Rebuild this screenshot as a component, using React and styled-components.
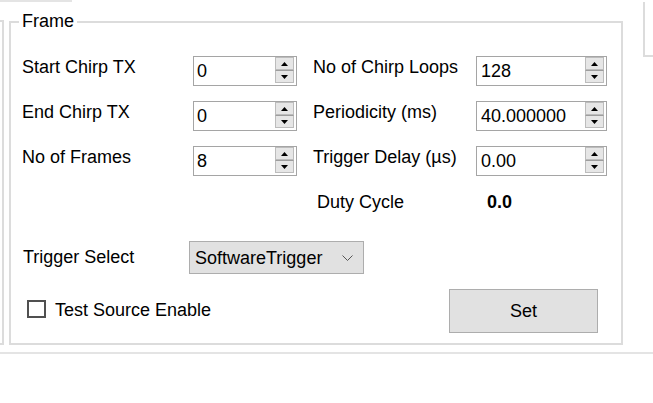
import React from 'react';
import styled, { createGlobalStyle } from 'styled-components';

const GlobalStyle = createGlobalStyle`
  body {
    margin: 0;
    background: #fff;
    font-family: "Liberation Sans", Arial, sans-serif;
    color: #000;
  }
`;

const Page = styled.div`
  width: 653px;
  height: 403px;
  overflow: hidden;
  background: #fff;
  display: flex;
  flex-direction: column;
`;

const TopRule = styled.div`
  width: 72px;
  height: 2px;
  background: #e4e4e4;
  flex-shrink: 0;
`;

const Body = styled.div`
  display: flex;
  flex-direction: row;
  align-items: flex-start;
`;

const SideStub = styled.div`
  box-sizing: border-box;
  width: 4px;
  height: 325px;
  margin-top: 18px;
  border: 2px solid #dcdcdc;
  border-left: none;
  flex-shrink: 0;
`;

const RightStub = styled.div`
  box-sizing: border-box;
  flex: 1;
  height: 55px;
  margin-left: 20px;
  border-left: 2px solid #dcdcdc;
  border-bottom: 2px solid #dcdcdc;
`;

const GroupBox = styled.fieldset`
  box-sizing: border-box;
  width: 614px;
  height: 334px;
  min-width: 0;
  margin: 9px 0 0 5px;
  padding: 24px 14px 0 11px;
  border: 2px solid #dcdcdc;
  flex-shrink: 0;
`;

const Legend = styled.legend`
  font-size: 18px;
  line-height: 21px;
  padding: 0 3px;
  margin-left: -3px;
`;

const SpinGrid = styled.div`
  display: grid;
  grid-template-columns: 171px 120px 163px 131px;
  grid-auto-rows: 30px;
  row-gap: 15px;
`;

const Label = styled.span`
  grid-column: ${p => p.$col || 'auto'};
  align-self: start;
  margin-top: 1px;
  padding-left: ${p => p.$indent || 0}px;
  font-size: 18px;
  line-height: 21px;
  white-space: nowrap;
`;

const Value = styled.span`
  align-self: start;
  margin-top: 1px;
  padding-left: 11px;
  font-size: 18px;
  line-height: 21px;
  font-weight: bold;
`;

const SpinBox = styled.div`
  box-sizing: border-box;
  width: ${p => p.$width}px;
  height: 30px;
  border: 1px solid #a5a5a5;
  background: #fff;
  display: flex;
  flex-direction: row;
`;

const SpinField = styled.div`
  flex: 1;
  padding: 4px 0 0 ${p => p.$pad || 3}px;
  font-size: 18px;
  line-height: 21px;
  white-space: nowrap;
  overflow: hidden;
`;

const Spinner = styled.div`
  width: 19px;
  margin: 0 2px 2px 0;
  display: flex;
  flex-direction: column;
`;

const SpinButton = styled.div`
  flex: 1;
  box-sizing: border-box;
  background: #e6e6e6;
  border: 1px solid #bcbcbc;
  display: flex;
  align-items: center;
  justify-content: center;
  & + & {
    border-top: 1px solid #9d9d9d;
  }
`;

const TriggerRow = styled.div`
  display: flex;
  align-items: center;
  margin-top: 20px;
`;

const RowLabel = styled.span`
  box-sizing: border-box;
  width: 167px;
  padding-left: 1px;
  font-size: 18px;
  line-height: 21px;
`;

const Combo = styled.div`
  box-sizing: border-box;
  width: 175px;
  height: 33px;
  padding: 1px 10px 0 5px;
  background: #e1e1e1;
  border: 1px solid #adadad;
  display: flex;
  align-items: center;
  justify-content: space-between;
  font-size: 18px;
  line-height: 21px;
`;

const BottomRow = styled.div`
  display: flex;
  justify-content: space-between;
  align-items: flex-start;
  margin-top: 15px;
`;

const CheckGroup = styled.label`
  display: flex;
  align-items: flex-start;
  gap: 9px;
  margin: 11px 0 0 5px;
  font-size: 18px;
  line-height: 21px;
`;

const CheckBox = styled.span`
  box-sizing: border-box;
  width: 19px;
  height: 18px;
  border: 2px solid #505050;
  background: #fff;
`;

const Button = styled.div`
  box-sizing: border-box;
  width: 149px;
  height: 44px;
  margin-right: 9px;
  background: #e1e1e1;
  border: 1px solid #adadad;
  display: flex;
  align-items: center;
  justify-content: center;
  font-size: 18px;
  line-height: 21px;
  padding-top: 1px;
`;

const BottomRule = styled.div`
  height: 2px;
  margin-top: 7px;
  background: #e4e4e4;
`;

const ArrowUp = () => (
  <svg width="7" height="4" viewBox="0 0 7 4"><polygon points="3.5,0 7,4 0,4" fill="#000" /></svg>
);

const ArrowDown = () => (
  <svg width="7" height="4" viewBox="0 0 7 4"><polygon points="0,0 7,0 3.5,4" fill="#000" /></svg>
);

const Chevron = () => (
  <svg width="11" height="6" viewBox="0 0 11 6">
    <polyline points="0.5,0.5 5.5,5.5 10.5,0.5" fill="none" stroke="#555" strokeWidth="1" />
  </svg>
);

const Spin = ({ value, width, pad }) => (
  <SpinBox $width={width}>
    <SpinField $pad={pad}>{value}</SpinField>
    <Spinner>
      <SpinButton><ArrowUp /></SpinButton>
      <SpinButton><ArrowDown /></SpinButton>
    </Spinner>
  </SpinBox>
);

const rows = [
  ['Start Chirp TX', '0', 'No of Chirp Loops', '128'],
  ['End Chirp TX', '0', 'Periodicity (ms)', '40.000000'],
  ['No of Frames', '8', 'Trigger Delay (µs)', '0.00'],
];

const App = () => {
  return (
    <Page>
      <GlobalStyle />
      <TopRule />
      <Body>
        <SideStub />
        <GroupBox>
          <Legend>Frame</Legend>
          <SpinGrid>
            {rows.map(([l1, v1, l2, v2]) => (
              <React.Fragment key={l1}>
                <Label>{l1}</Label>
                <Spin value={v1} width={104} pad={3} />
                <Label>{l2}</Label>
                <Spin value={v2} width={131} pad={4} />
              </React.Fragment>
            ))}
            <Label $col="3" $indent={4}>Duty Cycle</Label>
            <Value>0.0</Value>
          </SpinGrid>
          <TriggerRow>
            <RowLabel>Trigger Select</RowLabel>
            <Combo>
              <span>SoftwareTrigger</span>
              <Chevron />
            </Combo>
          </TriggerRow>
          <BottomRow>
            <CheckGroup>
              <CheckBox />
              <span>Test Source Enable</span>
            </CheckGroup>
            <Button>Set</Button>
          </BottomRow>
        </GroupBox>
        <RightStub />
      </Body>
      <BottomRule />
    </Page>
  );
};

export default App;
